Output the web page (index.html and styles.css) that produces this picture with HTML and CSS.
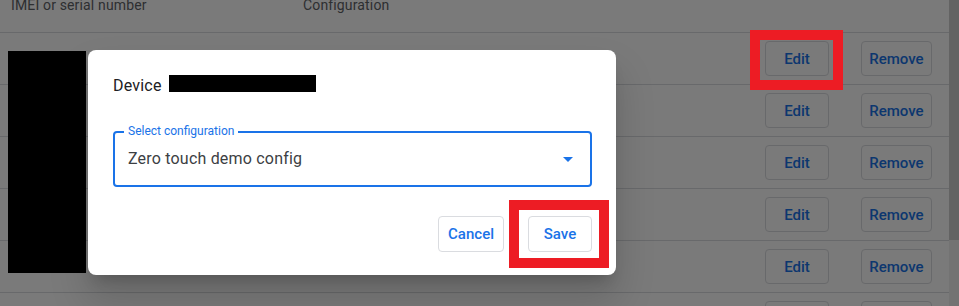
FILE: index.html
```html
<!DOCTYPE html>
<html lang="en">
    <head>
        <meta charset="UTF-8">
        <meta name="viewport" content="width=device-width, initial-scale=1.0">
        <title>Devices</title>
        <link rel="stylesheet" href="styles.css">
    </head>
    <body>
        <div class="page">
            <div class="table">
                <div class="thead">
                    <span>IMEI or serial number</span>
                    <span>Configuration</span>
                    <span></span>
                </div>
                <div class="row"><span></span><span></span><div class="actions"><button class="btn edit-btn">Edit</button><button class="btn remove-btn">Remove</button></div></div>
                <div class="row"><span></span><span></span><div class="actions"><button class="btn edit-btn">Edit</button><button class="btn remove-btn">Remove</button></div></div>
                <div class="row"><span></span><span></span><div class="actions"><button class="btn edit-btn">Edit</button><button class="btn remove-btn">Remove</button></div></div>
                <div class="row"><span></span><span></span><div class="actions"><button class="btn edit-btn">Edit</button><button class="btn remove-btn">Remove</button></div></div>
                <div class="row"><span></span><span></span><div class="actions"><button class="btn edit-btn">Edit</button><button class="btn remove-btn">Remove</button></div></div>
                <div class="row"><span></span><span></span><div class="actions"><button class="btn edit-btn">Edit</button><button class="btn remove-btn">Remove</button></div></div>
            </div>
            <div class="scrollbar">
                <div class="thumb"></div>
            </div>
        </div>

        <div class="scrim"></div>
        <div class="redact-column"></div>

        <div class="dialog">
            <h2 class="dialog-title">Device <span class="redact-inline"></span></h2>
            <div class="select-field">
                <label class="select-label">Select configuration</label>
                <span class="select-value">Zero touch demo config</span>
                <span class="select-arrow"></span>
            </div>
            <div class="dialog-actions">
                <button class="btn">Cancel</button>
                <button class="btn">Save</button>
            </div>
        </div>

        <!-- annotation boxes -->
        <div class="mark mark-edit"></div>
        <div class="mark mark-save"></div>
    </body>
</html>
```

FILE: styles.css
```css
body {
    margin: 0;
    height: 306px;
    overflow: hidden;
    background-color: #ffffff;
    font-family: Roboto, "Liberation Sans", sans-serif;
    position: relative;
}
.page {
    display: flex;
    height: 306px;
    overflow: hidden;
}
.table {
    flex: 1;
}
.thead,
.row {
    display: grid;
    grid-template-columns: 292px 1fr 167px;
    padding: 0 17px 0 11px;
    border-bottom: 1px solid #dadce0;
    box-sizing: border-box;
}
.thead {
    margin-top: -5px;
    height: 38px;
    font-size: 14px;
    line-height: 20px;
    letter-spacing: 0.15px;
    color: #5f6368;
}
.row {
    height: 52px;
    align-items: center;
}
.actions {
    display: flex;
    gap: 32px;
}
.btn {
    height: 36px;
    min-width: 64px;
    padding: 0 9px;
    border: 1px solid #dadce0;
    border-radius: 4px;
    background: #ffffff;
    color: #1a73e8;
    font-family: Roboto, "Liberation Sans", sans-serif;
    font-size: 15px;
    font-weight: 500;
    cursor: pointer;
}
.actions .btn {
    height: 35px;
    padding: 0;
}
.edit-btn {
    width: 64px;
}
.remove-btn {
    width: 71px;
}
.scrollbar {
    width: 10px;
    background-color: #f1f1f1;
}
.thumb {
    height: 240px;
    background-color: #d0d0d0;
}
.scrim {
    position: absolute;
    inset: 0;
    background-color: rgba(0, 0, 0, 0.52);
}
.redact-column {
    position: absolute;
    left: 8px;
    top: 51px;
    width: 78px;
    height: 222px;
    background-color: #000000;
}
.dialog {
    position: absolute;
    left: 88px;
    top: 50px;
    width: 528px;
    height: 225px;
    box-sizing: border-box;
    padding: 24px 24px 0 25px;
    background-color: #ffffff;
    border-radius: 8px;
    box-shadow: 0 11px 15px -7px rgba(0, 0, 0, 0.2), 0 24px 38px 3px rgba(0, 0, 0, 0.14);
}
.dialog-title {
    margin: 0;
    font-size: 16px;
    line-height: 24px;
    font-weight: 400;
    letter-spacing: 0.2px;
    color: #202124;
}
.redact-inline {
    display: inline-block;
    width: 147px;
    height: 17px;
    margin-left: 3px;
    vertical-align: -1px;
    background-color: #000000;
}
.select-field {
    position: relative;
    margin-top: 33px;
    height: 56px;
    box-sizing: border-box;
    border: 2px solid #1a73e8;
    border-radius: 4px;
    display: flex;
    align-items: center;
    justify-content: space-between;
    padding: 0 17px 0 13px;
}
.select-label {
    position: absolute;
    left: 9px;
    top: -10px;
    padding: 0 4px;
    background-color: #ffffff;
    font-size: 12px;
    line-height: 16px;
    color: #1a73e8;
}
.select-value {
    font-size: 16px;
    line-height: 24px;
    letter-spacing: 0.2px;
    color: #3c4043;
}
.select-arrow {
    width: 0;
    height: 0;
    border-left: 5px solid transparent;
    border-right: 5px solid transparent;
    border-top: 5px solid #1a73e8;
}
.dialog-actions {
    display: flex;
    justify-content: flex-end;
    gap: 24px;
    margin-top: 29px;
}
.mark {
    position: absolute;
    border: 10px solid #ed1c24;
    box-sizing: border-box;
}
.mark-edit {
    left: 750px;
    top: 30px;
    width: 93px;
    height: 60px;
}
.mark-save {
    left: 509px;
    top: 200px;
    width: 100px;
    height: 68px;
}
```
